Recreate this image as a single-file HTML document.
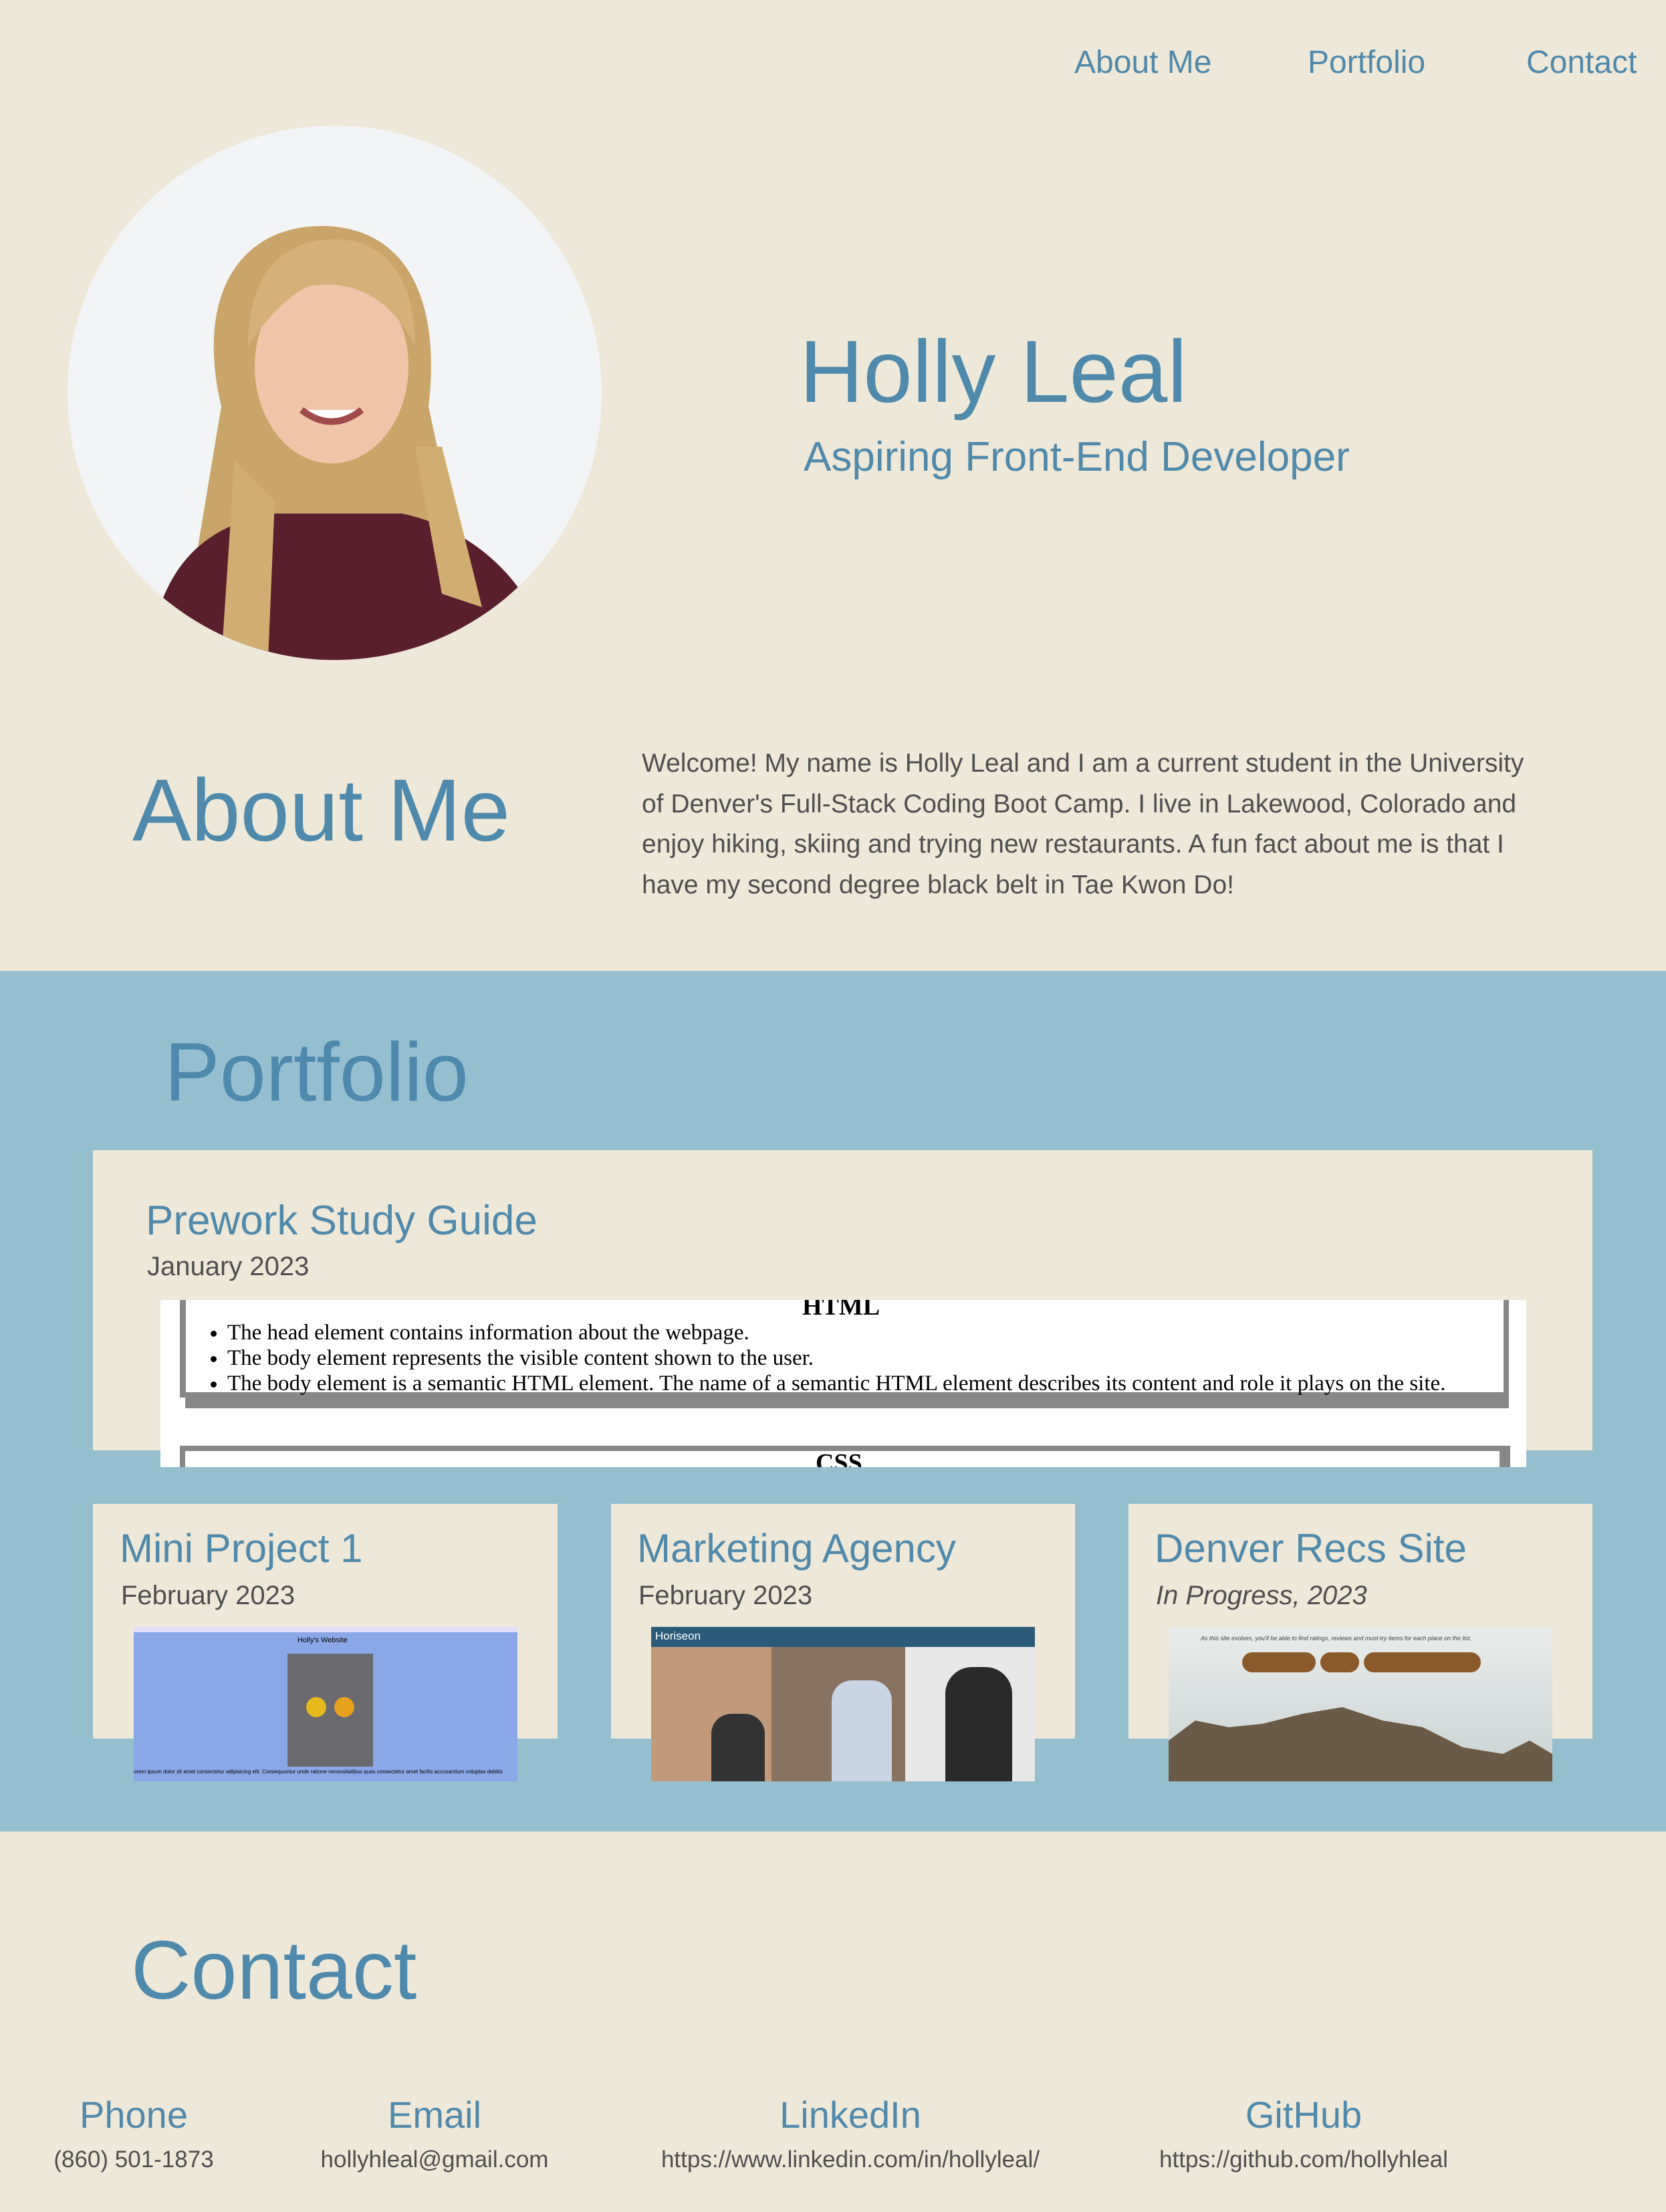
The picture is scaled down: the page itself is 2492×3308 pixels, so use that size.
<!DOCTYPE html>
<html><head><meta charset="utf-8"><style>
*{margin:0;padding:0;box-sizing:border-box}
body{width:2492px;height:3308px;background:#eee8d8;font-family:"Liberation Sans",sans-serif;position:relative;overflow:hidden;color:#4f4f4f}
.a{position:absolute;white-space:nowrap}
.h{color:#4f8aad;font-family:"Liberation Sans",sans-serif;font-weight:400}
.nav{font-size:48px;color:#4f8aad;top:66px}
.blue{position:absolute;left:0;top:1452px;width:2492px;height:1287px;background:#95bfcf}
.card{position:absolute;background:#eee8d8}
.date{font-size:40px;color:#4f4f4f}
.ct{font-size:56px;color:#4f8aad;text-align:center;width:600px}
.cv{font-size:35px;color:#4f4f4f;text-align:center;width:700px}
</style></head><body>
<div class="a nav" style="left:1607px">About Me</div>
<div class="a nav" style="left:1956px">Portfolio</div>
<div class="a nav" style="left:2283px">Contact</div>

<div style="position:absolute;left:101px;top:188px;width:799px;height:799px;border-radius:50%;overflow:hidden;background:#f4f5f7">
<svg width="799" height="799" viewBox="0 0 799 799">
<rect width="799" height="799" fill="#f3f4f6"/>
<path d="M230 420 C190 250 260 150 380 150 C500 150 560 250 540 420 L600 700 L180 720 Z" fill="#c9a56a"/>
<ellipse cx="395" cy="360" rx="115" ry="145" fill="#f0c4a8"/>
<path d="M270 330 C270 200 340 170 400 170 C470 170 520 220 520 330 C480 250 420 230 360 240 C320 260 290 300 270 330Z" fill="#d3b179"/>
<path d="M120 799 C140 640 220 600 300 580 L500 580 C600 600 700 680 720 799Z" fill="#5a1f2c"/>
<path d="M250 500 L230 799 L300 799 L310 560Z M520 480 L560 700 L620 720 L560 480Z" fill="#d0ae72"/>
<path d="M350 425 Q395 460 440 425" stroke="#a04a4a" stroke-width="10" fill="#fff"/>
</svg></div>

<div class="a h" style="left:1196px;top:480px;font-size:132px">Holly Leal</div>
<div class="a h" style="left:1202px;top:648px;font-size:62px">Aspiring Front-End Developer</div>

<div class="a h" style="left:198px;top:1136px;font-size:132px">About Me</div>
<div style="position:absolute;left:960px;top:1112px;width:1340px;font-size:39px;line-height:60.5px;color:#4f4f4f">Welcome! My name is Holly Leal and I am a current student in the University of Denver's Full-Stack Coding Boot Camp. I live in Lakewood, Colorado and enjoy hiking, skiing and trying new restaurants. A fun fact about me is that I have my second degree black belt in Tae Kwon Do!</div>

<div class="blue"></div>
<div class="a h" style="left:246px;top:1533px;font-size:124px">Portfolio</div>

<div class="card" style="left:139px;top:1720px;width:2243px;height:449px"></div>
<div class="a h" style="left:218px;top:1790px;font-size:62px">Prework Study Guide</div>
<div class="a date" style="left:220px;top:1872px">January 2023</div>
<div style="position:absolute;left:240px;top:1944px;width:2043px;height:250px;background:#fff;overflow:hidden;font-family:'Liberation Serif',serif;color:#000">
 <div style="position:absolute;left:29px;top:-20px;width:1980px;height:166px;border-left:9px solid #888;border-bottom:8px solid #888;box-shadow:8px 16px 0 #888"></div>
 <div class="a" style="left:960px;top:-12px;font-size:38px;font-weight:bold">HTML</div>
 <ul style="position:absolute;left:100px;top:30px;font-size:33px;line-height:38px">
 <li>The head element contains information about the webpage.</li>
 <li>The body element represents the visible content shown to the user.</li>
 <li>The body element is a semantic HTML element. The name of a semantic HTML element describes its content and role it plays on the site.</li></ul>
 <div style="position:absolute;left:29px;top:218px;width:1990px;height:60px;border:8px solid #888;border-right-width:16px"></div>
 <div class="a" style="left:980px;top:222px;font-size:38px;font-weight:bold">CSS</div>
</div>

<div class="card" style="left:139px;top:2249px;width:695px;height:351px"></div>
<div class="card" style="left:914px;top:2249px;width:694px;height:351px"></div>
<div class="card" style="left:1688px;top:2249px;width:694px;height:351px"></div>
<div class="a h" style="left:179px;top:2281px;font-size:60px">Mini Project 1</div>
<div class="a date" style="left:181px;top:2364px">February 2023</div>
<div class="a h" style="left:953px;top:2281px;font-size:60px">Marketing Agency</div>
<div class="a date" style="left:955px;top:2364px">February 2023</div>
<div class="a h" style="left:1727px;top:2281px;font-size:60px">Denver Recs Site</div>
<div class="a date" style="left:1729px;top:2364px;font-style:italic">In Progress, 2023</div>

<div style="position:absolute;left:200px;top:2433px;width:574px;height:231px;background:#8ca7e8;overflow:hidden">
 <div style="height:8px;background:#e2ddf8"></div>
 <div class="a" style="left:245px;top:14px;font-size:11px;color:#000">Holly's Website</div>
 <div style="position:absolute;left:230px;top:40px;width:128px;height:169px;background:#6b6b6f"></div>
 <div style="position:absolute;left:258px;top:105px;width:30px;height:30px;border-radius:50%;background:#e6b81c"></div>
 <div style="position:absolute;left:300px;top:105px;width:30px;height:30px;border-radius:50%;background:#e6a21c"></div>
 <div class="a" style="left:0;top:212px;font-size:8px;color:#000">orem ipsum dolor sit amet consectetur adipisicing elit. Consequuntur unde ratione necessitatibus quas consectetur amet facilis accusantium voluptas debitis</div>
</div>
<div style="position:absolute;left:974px;top:2433px;width:574px;height:231px;background:#8a7260;overflow:hidden">
 <div style="height:30px;background:#2b5b78;color:#fff;font-size:17px;padding:4px 6px">Horiseon</div>
 <div style="position:absolute;left:0;top:30px;width:180px;height:201px;background:#c09a7a"></div>
 <div style="position:absolute;left:380px;top:30px;width:194px;height:201px;background:#e8e8e8"></div>
 <div style="position:absolute;left:270px;top:80px;width:90px;height:151px;background:#c9d4e4;border-radius:30px 30px 0 0"></div>
 <div style="position:absolute;left:90px;top:130px;width:80px;height:101px;background:#333;border-radius:30px 30px 0 0"></div>
 <div style="position:absolute;left:440px;top:60px;width:100px;height:171px;background:#2a2a2a;border-radius:40px 40px 0 0"></div>
</div>
<div style="position:absolute;left:1748px;top:2433px;width:574px;height:231px;background:linear-gradient(#e9ecea,#c8d2d2);overflow:hidden">
 <div class="a" style="left:48px;top:12px;font-size:9px;color:#444;font-style:italic">As this site evolves, you'll be able to find ratings, reviews and must-try items for each place on the list.</div>
 <div style="position:absolute;left:110px;top:38px;width:110px;height:30px;border-radius:15px;background:#8b5a2b"></div>
 <div style="position:absolute;left:227px;top:38px;width:58px;height:30px;border-radius:15px;background:#8b5a2b"></div>
 <div style="position:absolute;left:292px;top:38px;width:175px;height:30px;border-radius:15px;background:#8b5a2b"></div>
 <svg style="position:absolute;left:0;top:0" width="574" height="231"><path d="M0 231 L0 170 L40 140 L90 150 L140 145 L200 130 L260 120 L320 140 L380 150 L440 180 L500 190 L540 170 L574 190 L574 231Z" fill="#6b5a45"/></svg>
</div>

<div class="a h" style="left:196px;top:2876px;font-size:124px">Contact</div>
<div class="a ct" style="left:-100px;top:3130px">Phone</div>
<div class="a cv" style="left:-150px;top:3210px">(860) 501-1873</div>
<div class="a ct" style="left:350px;top:3130px">Email</div>
<div class="a cv" style="left:300px;top:3210px">hollyhleal@gmail.com</div>
<div class="a ct" style="left:972px;top:3130px">LinkedIn</div>
<div class="a cv" style="left:922px;top:3210px">https://www.linkedin.com/in/hollyleal/</div>
<div class="a ct" style="left:1650px;top:3130px">GitHub</div>
<div class="a cv" style="left:1600px;top:3210px">https://github.com/hollyhleal</div>
</body></html>
